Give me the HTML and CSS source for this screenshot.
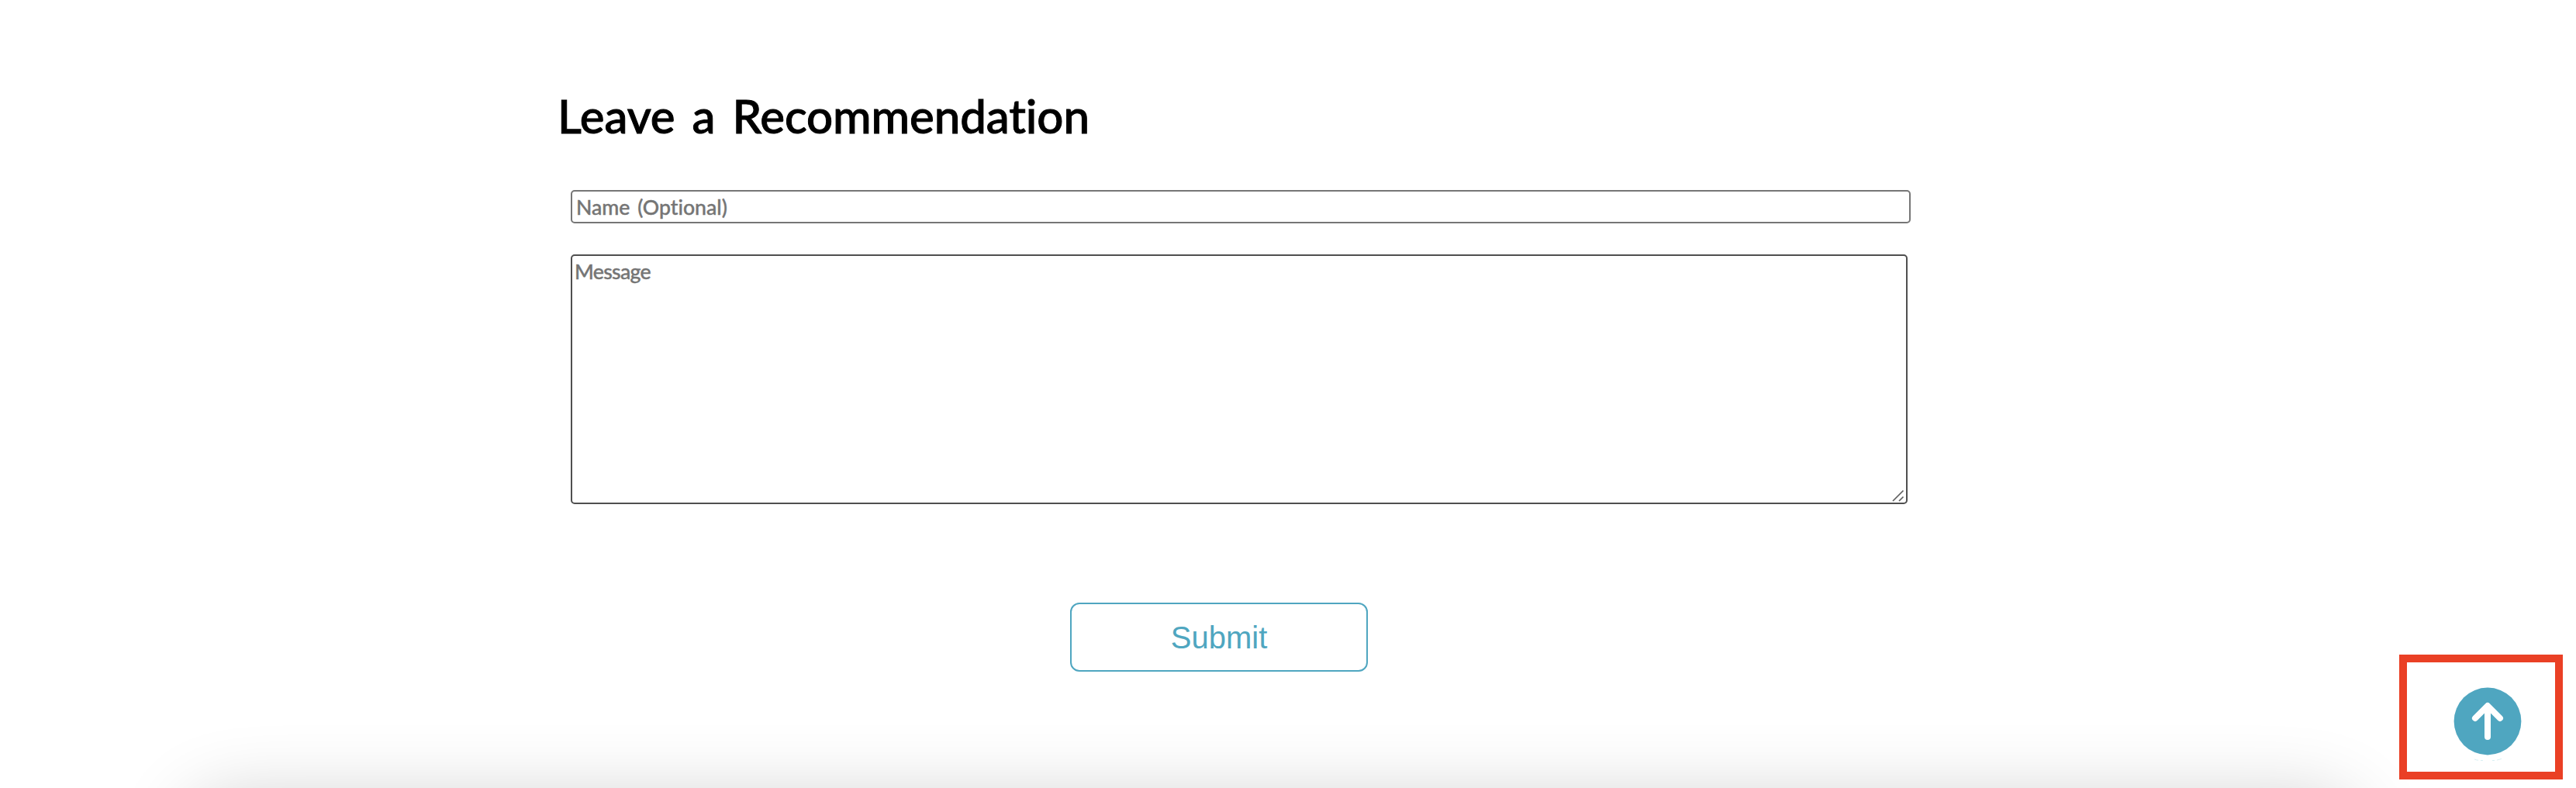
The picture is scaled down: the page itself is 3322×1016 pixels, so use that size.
FILE: index.html
```html
<!DOCTYPE html>
<html lang="en">
<head>
<meta charset="utf-8">
<title>Leave a Recommendation</title>
<link rel="stylesheet" href="styles.css">
</head>
<body>
<main class="page">
  <section class="recommend">
    <h2 class="title">Leave a Recommendation</h2>
    <form class="form">
      <input class="field name" type="text" placeholder="Name (Optional)">
      <div class="message-box">
        <textarea class="field message" placeholder="Message"></textarea>
        <svg class="grip" viewBox="0 0 16 16"><path d="M1 15L14.500 1.500M9 15l5.500-5.500" stroke="#5f5f5f" stroke-width="1.700" fill="none"/></svg>
      </div>
      <button class="submit" type="button">Submit</button>
    </form>
  </section>
  <footer class="footer"></footer>
</main>
<div class="highlight">
  <a class="to-top" href="#" aria-label="Back to top">
    <svg class="to-top-icon" viewBox="0 0 88 100">
      <circle cx="44" cy="44" r="43.4" fill="#4fa6c0"/>
      <path d="M44 64V25M28 40L44 24l16 16" fill="none" stroke="#fff" stroke-width="8" stroke-linecap="round" stroke-linejoin="round"/>
      <path d="M27 93q3 1.200 5 1.200M35 94.500h3M50 94.500h3M56 94q3-.6 6-1.700" fill="none" stroke="#d9f0f4" stroke-width="1"/>
    </svg>
  </a>
</div>
</body>
</html>
```
FILE: styles.css
```css
* {
  box-sizing: border-box;
}

body {
  margin: 0;
  background: #fff;
  font-family: "Trebuchet MS", Lato, sans-serif;
  font-variant-ligatures: none;
}

.page {
  height: 1016px;
  overflow: hidden;
}

.recommend {
  height: 1028px;
  padding: 109px 0 0 719px;
}

.title {
  margin: 0;
  height: 80px;
  font-size: 60px;
  line-height: 80px;
  font-weight: 500;
  letter-spacing: -0.1px;
  word-spacing: 7px;
  -webkit-text-stroke: 1px #000;
  color: #000;
  white-space: nowrap;
}

.form {
  display: flex;
  flex-direction: column;
  align-items: flex-start;
  margin: 56px 0 0 17px;
}

.field {
  display: block;
  margin: 0;
  background: #fff;
  border-radius: 5px;
  font-family: inherit;
  font-size: 26.67px;
  font-weight: 500;
  font-variant-ligatures: none;
}

.field::placeholder {
  color: #757575;
  -webkit-text-stroke: 0.4px #757575;
}

.name {
  width: 1728px;
  height: 43px;
  padding: 0 5px;
  border: 2px solid #767676;
  word-spacing: 3px;
}

.message-box {
  position: relative;
  margin-top: 40px;
}

.message {
  width: 1724px;
  height: 322px;
  padding: 4px 3px;
  border: 2px solid #4f4f4f;
  letter-spacing: -0.7px;
  line-height: 32px;
  resize: none;
}

.grip {
  position: absolute;
  right: 4px;
  bottom: 3px;
  width: 16px;
  height: 16px;
}

.submit {
  width: 384px;
  height: 89px;
  margin: 127px 0 0 644px;
  padding: 2px 0 0;
  border: 2px solid #4fa6c0;
  border-radius: 12px;
  background: #fff;
  color: #4fa6c0;
  font-family: Arial, "Liberation Sans", sans-serif;
  font-size: 40px;
}

.footer {
  height: 200px;
  margin: 0 280px 0 240px;
  border-radius: 60px;
  box-shadow: 0 0 96px rgba(0, 0, 0, 0.19);
}

/* Callout frame drawn over the page */
.highlight {
  position: absolute;
  left: 3094px;
  top: 844px;
  width: 211px;
  height: 161px;
  padding: 32px 0 0 60px;
  border: 10px solid #ea4025;
  background: #fff;
}

.to-top,
.to-top-icon {
  display: block;
  width: 88px;
  height: 100px;
}
```
